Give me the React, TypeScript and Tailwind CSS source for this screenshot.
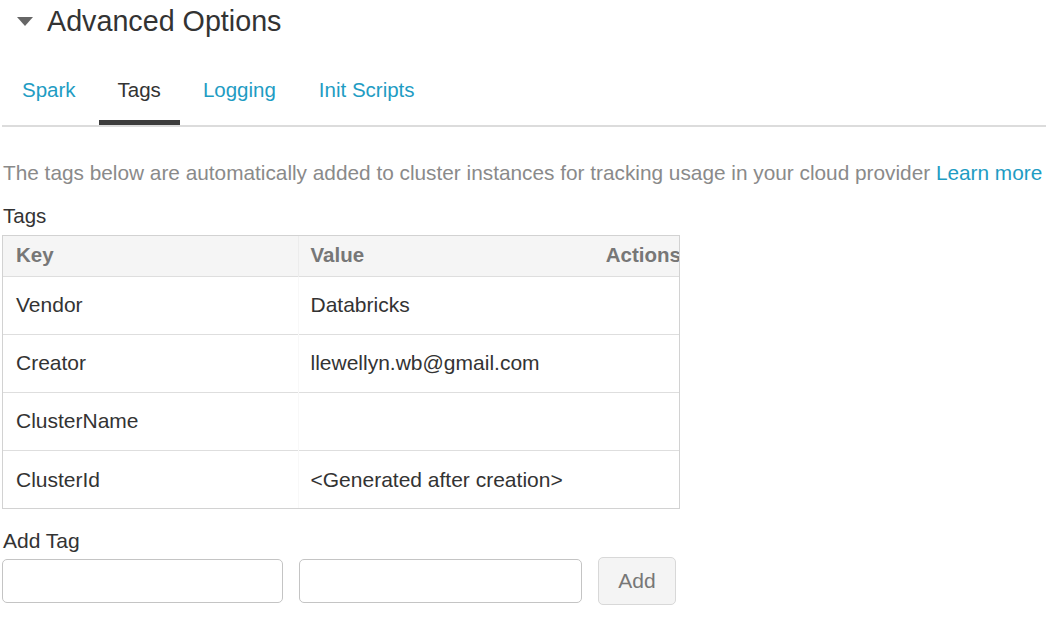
import React from "react";

const rows = [
  ["Vendor", "Databricks"],
  ["Creator", "llewellyn.wb@gmail.com"],
  ["ClusterName", ""],
  ["ClusterId", "<Generated after creation>"],
];

export default function App() {
  return (
    <div
      className="w-[1046px] h-[622px] bg-white overflow-hidden pl-[2px] text-[#333]"
      style={{ fontFamily: '"Liberation Sans", Arial, sans-serif' }}
    >
      {/* Title */}
      <div className="flex items-center pt-[5px] h-[37px]">
        <svg width="16" height="9" viewBox="0 0 16 9" className="ml-[15px] mr-[14px]">
          <path d="M0 0 L16 0 L8 9 Z" fill="#666" />
        </svg>
        <span className="text-[28.7px] leading-[32px] text-[#333]">Advanced Options</span>
      </div>

      {/* Tabs */}
      <div className="mt-[36px] flex gap-[3px]">
        {["Spark", "Tags", "Logging", "Init Scripts"].map((t) => (
          <div
            key={t}
            className={
              t === "Tags"
                ? "px-[19px] pt-[5px] pb-[18px] text-[20.5px] leading-[24px] text-[#333] border-b-[5px] border-[#3c3c3c]"
                : "px-[20px] pt-[5px] pb-[18px] text-[20.5px] leading-[24px] text-[#1e9cc3] border-b-[5px] border-transparent"
            }
          >
            {t}
          </div>
        ))}
      </div>
      <div className="h-[2px] bg-[#dcdcdc]" />

      {/* Description */}
      <div className="mt-[34px] text-[20.8px] leading-[24px] text-[#8a8a8a] whitespace-nowrap pl-[1px]">
        The tags below are automatically added to cluster instances for tracking usage in your cloud provider{" "}
        <span className="text-[#1e9cc3]">Learn more</span>
      </div>

      <div className="mt-[19px] text-[20.5px] leading-[24px] text-[#333] pl-[1px]">Tags</div>

      {/* Table */}
      <div className="mt-[7px] w-[678px] border border-[#d2d2d2] overflow-hidden">
        <table className="w-[695px] border-collapse table-fixed">
          <colgroup>
            <col className="w-[295px]" />
            <col className="w-[250px]" />
            <col className="w-[150px]" />
          </colgroup>
          <thead>
            <tr className="bg-[#f5f5f5] h-[40px]">
              <th className="text-left font-bold text-[20.5px] text-[#777] pl-[13px] border-r border-[#ececec]">Key</th>
              <th className="text-left font-bold text-[20.5px] text-[#777] pl-[12px]">Value</th>
              <th className="text-right font-bold text-[20.5px] text-[#777] pr-[17px] whitespace-nowrap">Actions</th>
            </tr>
          </thead>
          <tbody>
            {rows.map(([k, v]) => (
              <tr key={k} className="h-[58px] border-t border-[#dedede]">
                <td className="pl-[13px] text-[21px] text-[#333] border-r border-[#f8f8f8]">{k}</td>
                <td className="pl-[12px] text-[21px] text-[#333] whitespace-nowrap">{v}</td>
                <td />
              </tr>
            ))}
          </tbody>
        </table>
      </div>

      <div className="mt-[20px] text-[21px] leading-[24px] text-[#333] pl-[1px]">Add Tag</div>

      <div className="mt-[4px] flex items-center gap-[16px]">
        <div className="w-[281px] h-[44px] rounded-[5px] border border-[#c4c4c4] bg-white" />
        <div className="w-[283px] h-[44px] rounded-[5px] border border-[#c4c4c4] bg-white" />
        <div className="w-[78px] h-[48px] rounded-[5px] border border-[#d8d8d8] bg-[#f4f4f4] flex items-center justify-center text-[21px] text-[#777]">
          Add
        </div>
      </div>
    </div>
  );
}
